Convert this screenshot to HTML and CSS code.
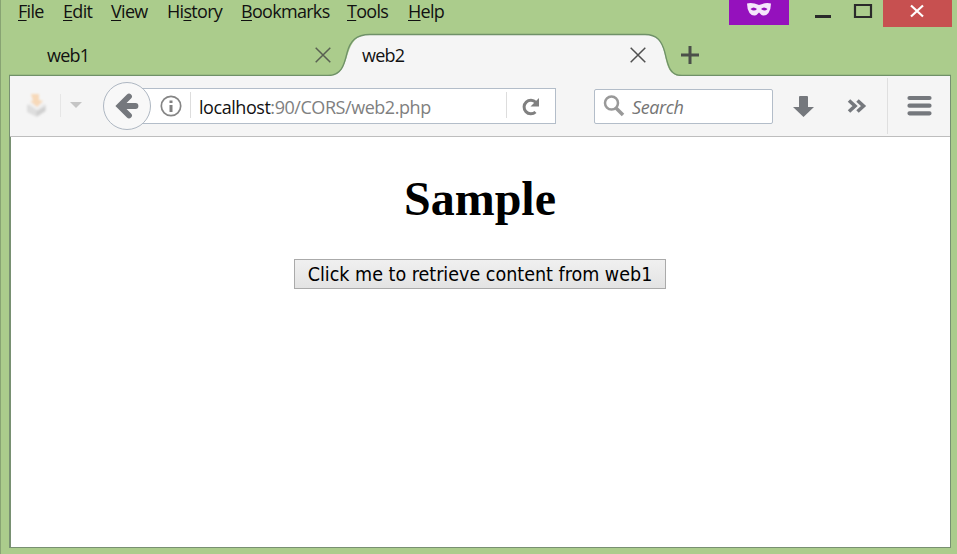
FILE: index.html
```html
<!DOCTYPE html>
<html lang="en">
<head>
<meta charset="utf-8">
<title>web2</title>
<link rel="stylesheet" href="styles.css">
</head>
<body>
<div class="window">
  <header class="titlebar">
    <nav class="menu">
      <span class="m-file"><u>F</u>ile</span><span class="m-edit"><u>E</u>dit</span><span class="m-view"><u>V</u>iew</span><span class="m-history">Hi<u>s</u>tory</span><span class="m-bookmarks"><u>B</u>ookmarks</span><span class="m-tools"><u>T</u>ools</span><span class="m-help"><u>H</u>elp</span>
    </nav>
    <div class="private">
      <svg width="60" height="25" viewBox="0 0 60 25"><path fill="#f5e6fb" fill-rule="evenodd" d="M18 3.500Q23 2 30 5Q37 2 42 3.500Q42 9 39.500 13Q37 16 34 15.500Q32 15 30 12.500Q28 15 26 15.500Q23 16 20.500 13Q18 9 18 3.500ZM21.500 9Q25 12 28 9Q24.500 6 21.500 9ZM32 9Q35.500 12 38.500 9Q35 6 32 9Z"/></svg>
    </div>
    <svg class="controls" width="94" height="27" viewBox="0 0 94 27"><path fill="#2a2a2a" d="M26 15h16v3H26z"/><path d="M66 5h16v12H66z" fill="none" stroke="#2a2a2a" stroke-width="2.200"/></svg>
    <button class="close" aria-label="Close"><svg width="69" height="27" viewBox="0 0 69 27"><path d="M28 5.500L40 16.500M40 5.500L28 16.500" stroke="#fff" stroke-width="2.200"/></svg></button>
  </header>
  <div class="tabs">
    <svg class="tabshape" width="957" height="43" viewBox="0 0 957 43"><path fill="#f5f5f5" d="M328 43C355 43 339 1.500 370 1.500H645C675 1.500 656 43 682 43Z"/><path fill="none" stroke="#6f9168" stroke-width="1.300" d="M9 42.500H328C341 42.500 344 33 347 20C350 8 356 1.500 370 1.500H645C657 1.500 662 8 665 20C668 33 670 42.500 682 42.500H951"/></svg>
    <div class="tab first"><span>web1</span><svg width="16" height="16" viewBox="0 0 16 16"><path d="M.7.700l14.600 14.600M15.300.700L.700 15.300" stroke="#596052" stroke-width="1.500"/></svg></div>
    <div class="tab second"><span>web2</span><svg width="16" height="16" viewBox="0 0 16 16"><path d="M.7.700l14.600 14.600M15.300.700L.700 15.300" stroke="#505050" stroke-width="1.500"/></svg></div>
    <svg class="plus" width="18" height="18" viewBox="0 0 18 18"><path d="M9 0v18M0 9h18" stroke="#4b4f49" stroke-width="3"/></svg>
  </div>
  <main class="frame">
    <div class="toolbar">
      <svg class="addon" width="93" height="60" viewBox="10 76 93 60"><defs><filter id="soft"><feGaussianBlur stdDeviation=".8"/></filter></defs><g filter="url(#soft)"><path fill="#dedede" d="M27 105l8-3 11 3v6l-9 6-10-5z"/><path fill="#f2f2f2" d="M28 104l7-2 10 3-8 5z"/><path fill="#cfcfcf" d="M36 112l9-5v4l-8 5z"/><path fill="#f7d9b9" d="M31 94h8v6l4 1-6 6-7-6h3z"/></g><path d="M60.500 94v23" stroke="#e6e6e6"/><path fill="#c5c5c5" d="M70 102h12l-6 6z"/></svg>
      <div class="address">
        <svg class="back" width="50" height="50" viewBox="102 81 50 50"><circle cx="127" cy="106" r="23.500" fill="#f8f8f8" stroke="#aeb7c2"/><path d="M129 96.500L119.500 106l9.500 9.500M121 106h14.500" fill="none" stroke="#75787d" stroke-width="5.800" stroke-linecap="round"/></svg>
        <svg class="info" width="40" height="34" viewBox="152 89 40 34"><circle cx="171" cy="106" r="9.700" fill="none" stroke="#858585" stroke-width="1.700"/><path fill="#808080" d="M169.500 100.500h3v2.500h-3zM169.500 105h3v7h-3z"/><path d="M190.500 92v26" stroke="#ddd"/></svg>
        <span class="url"><b>localhost</b>:90/CORS/web2.php</span>
        <svg class="reload" width="50" height="34" viewBox="505 89 50 34"><path d="M506.500 92v26" stroke="#ddd"/><path d="M535.800 102.300A6.800 6.800 0 1 0 535.500 112" fill="none" stroke="#808080" stroke-width="3"/><path fill="#808080" d="M539 98v8.500h-8.500z"/></svg>
      </div>
      <div class="search">
        <svg width="36" height="33" viewBox="595 90 36 33"><circle cx="611.500" cy="103" r="6.500" fill="none" stroke="#999" stroke-width="2.500"/><path d="M616 108l7 7" stroke="#999" stroke-width="3.500"/></svg><span>Search</span>
      </div>
      <svg class="tools" width="177" height="60" viewBox="773 76 177 60"><path fill="#75787d" d="M799 97q0-1 1-1h7q1 0 1 1v10h6L803.500 117 793 107h6z"/><path d="M849 100.500l6 5.500-6 5.500M857.500 100.500l6 5.500-6 5.500" fill="none" stroke="#75787d" stroke-width="3.600"/><path d="M887.500 78v56" stroke="#dfdfdf"/><path d="M909.500 98h20M909.500 105.700h20M909.500 113.300h20" stroke="#75787d" stroke-width="4.200" stroke-linecap="round"/></svg>
    </div>
    <section class="page">
      <h1>Sample</h1>
      <button class="retrieve"><span>Click me to retrieve content from web1</span></button>
    </section>
  </main>
</div>
</body>
</html>
```
FILE: styles.css
```css
* { box-sizing: border-box; }
body { margin: 0; background: #abcc8c; overflow: hidden; }
svg { display: block; flex: none; }
.window { width: 957px; height: 554px; border-left: 1px solid #88a473; font: 18px/24px "Open Sans", sans-serif; color: #111; }
.titlebar { display: flex; height: 33px; align-items: flex-start; }
.menu { display: grid; grid-template-columns: 45px 48px 56px 74px 106px 61px 1fr; width: 711px; padding-left: 17px; white-space: nowrap; line-height: 22px; letter-spacing: -.7px; }
.menu u { text-decoration: underline; text-decoration-thickness: 1px; text-underline-offset: 2px; text-decoration-skip-ink: none; }
.private { margin-left: 17px; width: 60px; height: 25px; background: #9511bd; }
.close { width: 69px; height: 27px; padding: 0; border: 0; background: #c75050; }
.tabs { position: relative; display: flex; height: 43px; }
.tabshape { position: absolute; left: -1px; top: 0; }
.tab { position: relative; display: flex; justify-content: space-between; padding-top: 10px; letter-spacing: -.8px; }
.tab svg { margin-top: 4px; }
.first { margin-left: 46px; width: 284px; }
.second { margin-left: 31px; width: 284px; }
.plus { position: relative; margin: 13px 0 0 35px; }
.frame { width: 942px; height: 472px; margin-left: 8px; border: 1px solid #789072; border-top: 0; background: #fff; }
.toolbar { display: flex; align-items: center; height: 61px; background: #f5f5f5; border-bottom: 1px solid #bdbdbd; }
.addon { width: 93px; }
.address { display: flex; align-items: center; width: 453px; height: 36px; margin-top: -1px; background: linear-gradient(#b3bdc9, #b3bdc9) right top / 423px 1px no-repeat, linear-gradient(#b3bdc9, #b3bdc9) right bottom / 423px 1px no-repeat, linear-gradient(90deg, transparent 30px, #fff 30px); border-right: 1px solid #b3bdc9; }
.back { margin-left: -1px; }
.url { width: 313px; padding: 2px 0 0 7px; color: #808080; letter-spacing: -.45px; }
.url b { font-weight: 400; color: #111; }
.info, .reload { height: 34px; }
.search { display: flex; align-items: center; width: 179px; height: 35px; margin-left: 38px; border: 1px solid #b3bdc9; border-radius: 2px; background: #fff; color: #757575; font-style: italic; letter-spacing: -.4px; }
.search span { padding: 2px 0 0 1px; }
.tools { width: 177px; }
.page { display: flex; flex-direction: column; align-items: center; height: 410px; padding-top: 34px; border-left: 1px solid #789072; }
h1 { margin: 0 1px 0 0; font: bold 48px/55px "Liberation Serif", serif; color: #000; }
.retrieve { width: 372px; height: 30px; margin: 33px 1px 0 0; padding: 2px 0 0; border: 1px solid #aaa; background: linear-gradient(#f0f0f0, #e3e3e3); font: 19.500px/26px "DejaVu Sans Condensed", "DejaVu Sans", sans-serif; font-stretch: condensed; color: #000; white-space: nowrap; letter-spacing: 0; }
```
